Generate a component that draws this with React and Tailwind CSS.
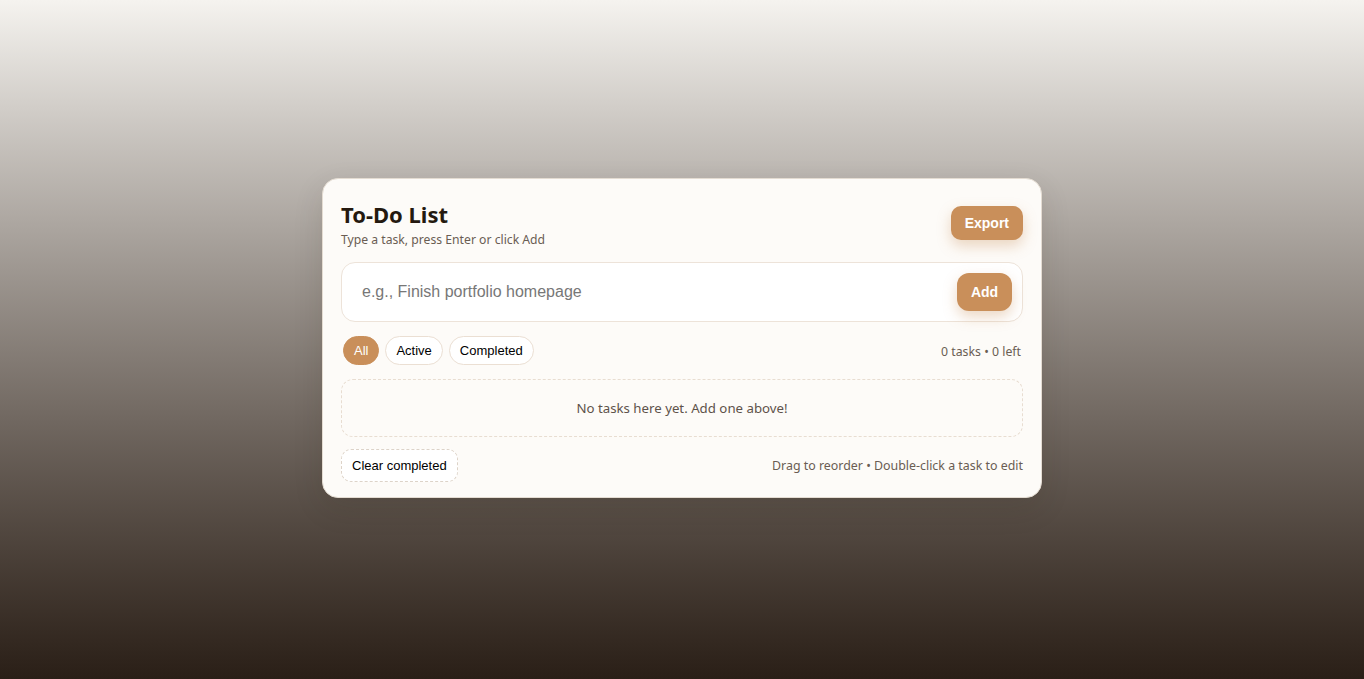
import { useState } from "react";

const FILTERS = ["All", "Active", "Completed"];

const App = () => {
    const [tasks] = useState([]);
    const [filter, setFilter] = useState("All");
    const [text, setText] = useState("");

    const left = tasks.filter(t => !t.done).length;

    return <div className="min-h-screen w-full flex items-center justify-center pb-[3px] bg-linear-to-b from-[#f5f3ef] to-[#2a1f17] font-['Noto_Sans',sans-serif]">
        <div className="w-[720px] bg-[#fdfbf8] border border-solid border-[#e4dcd2] rounded-[16px] shadow-[0_10px_30px_rgba(40,30,20,0.12)] px-[18px] pt-[18px] pb-[15px] flex flex-col">
            <div className="flex items-center justify-between h-[50px]">
                <div className="flex flex-col self-start">
                    <h1 className="mt-[4px] text-[22px] leading-[26px] font-bold text-[#24190f]">To-Do List</h1>
                    <p className="text-[12.2px] leading-4 mt-[5px] text-[#6a5d53]">Type a task, press Enter or click Add</p>
                </div>
                <button className="mt-[2px] h-[34px] px-[14px] rounded-[10px] bg-[#c98f5a] text-white text-[14px] font-bold font-['Liberation_Sans',Arial,sans-serif] shadow-[0_6px_14px_rgba(201,143,90,0.35)]">
                    Export
                </button>
            </div>

            <div className="mt-[15px] h-[60px] flex items-center bg-white border border-solid border-[#ede3d9] rounded-[14px] pl-[20px] pr-[10px]">
                <input type="text"
                    value={text}
                    onChange={(e) => setText(e.target.value)}
                    placeholder="e.g., Finish portfolio homepage"
                    className="flex-1 h-full bg-transparent outline-none text-[16px] text-[#333] placeholder:text-[#777] font-['Liberation_Sans',Arial,sans-serif]"
                />
                <button className="h-[38px] w-[55px] rounded-[12px] bg-[#c98f5a] text-white text-[14px] font-bold font-['Liberation_Sans',Arial,sans-serif] shadow-[0_6px_14px_rgba(201,143,90,0.35)]">
                    Add
                </button>
            </div>

            <div className="mt-[14px] flex items-center justify-between">
                <div className="flex items-center gap-[6px] pl-[2px]">
                    { FILTERS.map(f => {
                        const active = f === filter;
                        return <button key={f}
                            onClick={() => setFilter(f)}
                            className={active
                                ? "h-[29px] px-[10px] rounded-full border border-solid border-[#c98f5a] bg-[#c98f5a] text-white text-[13px] font-['Liberation_Sans',Arial,sans-serif]"
                                : "h-[29px] px-[10px] rounded-full border border-solid border-[#ebdfd3] bg-white text-black text-[13px] font-['Liberation_Sans',Arial,sans-serif]"}>
                            {f}
                        </button>
                    }) }
                </div>
                <span className="pt-[4px] text-[12.3px] text-[#6a5d53] pr-[2px]">{tasks.length} tasks • {left} left</span>
            </div>

            <div className="mt-[14px] h-[58px] pt-[2px] flex items-center justify-center border border-dashed border-[#e8ddd1] rounded-[12px] text-[13.25px] text-[#5e524a]">
                No tasks here yet. Add one above!
            </div>

            <div className="mt-[12px] flex items-center justify-between">
                <button className="h-[33px] px-[10px] rounded-[10px] border border-dashed border-[#ddd3c8] bg-white text-black text-[13px] font-['Liberation_Sans',Arial,sans-serif]">
                    Clear completed
                </button>
                <span className="pt-[2px] text-[12.4px] text-[#6a5d53]">Drag to reorder • Double-click a task to edit</span>
            </div>
        </div>
    </div>
};

export default App;
